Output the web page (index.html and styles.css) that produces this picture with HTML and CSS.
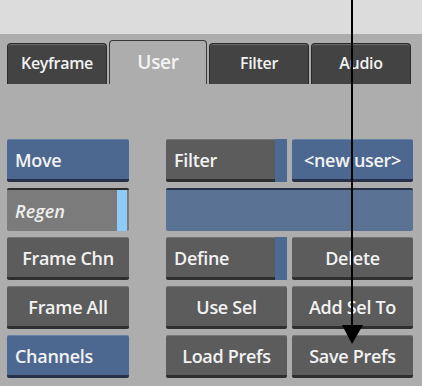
FILE: index.html
```
<!DOCTYPE html>
<html lang="en">
<head>
    <meta charset="UTF-8" />
    <title>User Panel</title>
    <link rel="stylesheet" href="styles.css">
</head>
<body>
<div class="top-band"></div>

<div class="panel">
    <div class="tabs">
        <div class="tab">Keyframe</div>
        <div class="tab active">User</div>
        <div class="tab">Filter</div>
        <div class="tab">Audio</div>
    </div>

    <div class="grid">
        <div class="btn blue left">Move</div>
        <div class="spacer"></div>
        <div class="btn left split">Filter<span class="strip"></span></div>
        <div class="btn blue">&lt;new user&gt;</div>

        <div class="field gray left"><i>Regen</i><span class="light-strip"></span></div>
        <div class="spacer"></div>
        <div class="field blue-field wide"></div>

        <div class="btn">Frame Chn</div>
        <div class="spacer"></div>
        <div class="btn left split">Define<span class="strip"></span></div>
        <div class="btn">Delete</div>

        <div class="btn">Frame All</div>
        <div class="spacer"></div>
        <div class="btn">Use Sel</div>
        <div class="btn">Add Sel To</div>

        <div class="btn blue left">Channels</div>
        <div class="spacer"></div>
        <div class="btn">Load Prefs</div>
        <div class="btn">Save Prefs</div>
    </div>
</div>

<!-- callout arrow drawn over the panel -->
<svg class="arrow" width="422" height="386" viewBox="0 0 422 386">
    <line x1="352" y1="0" x2="352" y2="327" stroke="#000" stroke-width="2"/>
    <polygon points="342,325 363,325 352,344" fill="#000"/>
</svg>
</body>
</html>
```

FILE: styles.css
```
body {
    margin: 0;
    background-color: #adadad;
    font-family: 'Open Sans', 'DejaVu Sans', sans-serif;
    font-weight: 600;
    color: #f2f2f2;
    width: 422px;
    height: 386px;
    overflow: hidden;
    position: relative;
}

.top-band {
    height: 34px;
    background-color: #dcdcdc;
}

.panel {
    padding: 6px 0 0 7px;
}

.tabs {
    display: flex;
    align-items: flex-end;
    gap: 2px;
    height: 44px;
}

.tab {
    width: 100px;
    height: 41px;
    background-color: #434343;
    border: 1px solid #2a2a2a;
    border-bottom: none;
    border-radius: 4px 4px 0 0;
    box-shadow: inset 0 1px 0 #6a6a6a;
    display: flex;
    align-items: center;
    justify-content: center;
    font-size: 16px;
    letter-spacing: -0.3px;
    padding-bottom: 2px;
    box-sizing: border-box;
}

.tab.active {
    width: 98px;
    height: 44px;
    background-color: #adadad;
    border-color: #3a3a3a;
    box-shadow: none;
    font-size: 19px;
    color: #f4f4f4;
}

.grid {
    display: grid;
    grid-template-columns: 122px 27px 121px 121px;
    grid-auto-rows: 43px;
    column-gap: 5px;
    row-gap: 6px;
    margin-top: 55px;
}

.btn {
    position: relative;
    background-color: #5c5c5c;
    border-radius: 2px;
    border-top: 1px solid #767676;
    border-bottom: 3px solid #2f2f2f;
    display: flex;
    align-items: center;
    justify-content: center;
    font-size: 18px;
    letter-spacing: -0.3px;
    white-space: nowrap;
    box-sizing: border-box;
}

.btn.left {
    justify-content: flex-start;
    padding-left: 8px;
}

.btn.blue {
    background-color: #4c6891;
    border-top-color: #6a83a8;
    border-bottom-color: #27324a;
}

.split .strip {
    position: absolute;
    right: 0;
    top: -1px;
    bottom: -3px;
    width: 12px;
    background-color: #4d6a92;
}

.field {
    position: relative;
    border-top: 2px solid #2b2b2b;
    border-radius: 2px;
    box-sizing: border-box;
    display: flex;
    align-items: center;
    font-size: 18px;
}

.field.gray {
    background-color: #7b7b7b;
    padding-left: 8px;
}

.field.gray i {
    color: #eeeeee;
}

.light-strip {
    position: absolute;
    right: 2px;
    top: 0;
    bottom: 0;
    width: 10px;
    background-color: #8ecbf6;
}

.blue-field {
    background-color: #5a7394;
    border-top-color: #27324a;
}

.wide {
    grid-column: 3 / 5;
}

.arrow {
    position: absolute;
    left: 0;
    top: 0;
    pointer-events: none;
}
```
